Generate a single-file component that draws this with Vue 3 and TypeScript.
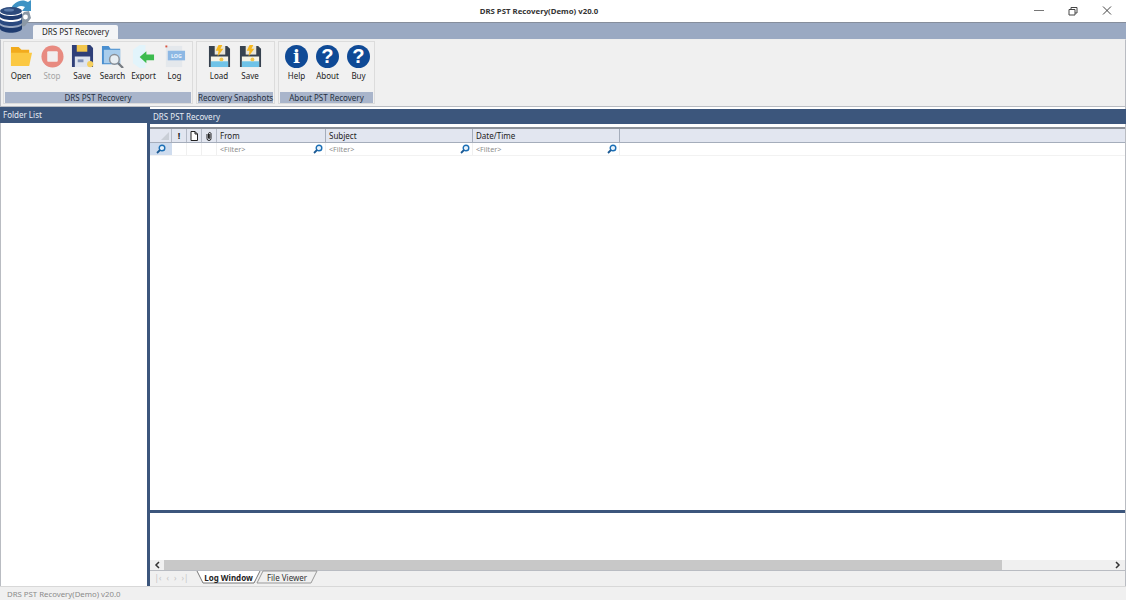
<script setup lang="ts">
const columns = [
  { name: 'From', width: 109 },
  { name: 'Subject', width: 147 },
  { name: 'Date/Time', width: 147 },
]
</script>

<template>
  <div class="app">
    <svg class="logo" viewBox="0 0 32 36" width="32" height="36">
      <path d="M11 9 C13 2 22 -2 28 2 L31 0 L31 11 L22 11 L25 7 C21 5 17 6 15 10Z" fill="#3f93c4" />
      <path d="M24 12 L29 11 L31 18 L28 22 L25 26 L21 27 L21 16Z" fill="#8b98a6" />
      <circle cx="25.500" cy="17" r="2.400" fill="#fff" />
      <ellipse cx="11" cy="11" rx="11" ry="4" fill="#2c4a7c" />
      <ellipse cx="9" cy="10" rx="5" ry="1.500" fill="#5c7cab" />
      <path d="M0 13 C3 17 19 17 22 13 V17 C19 21 3 21 0 17Z" fill="#1f3c70" />
      <path d="M0 19 C3 23 19 23 22 19 V23 C19 27 3 27 0 23Z" fill="#2b4a80" />
      <path d="M0 25 C3 29 19 29 22 25 V29 C19 34 3 34 0 29Z" fill="#1f3c70" />
    </svg>

    <header class="titlebar">
      <span class="title">DRS PST Recovery(Demo) v20.0</span>
      <div class="winbtns">
        <svg width="12" height="12" viewBox="0 0 12 12"><path d="M1 5.500H11" stroke="#777" fill="none" /></svg>
        <svg width="12" height="12" viewBox="0 0 12 12"><path d="M2 4.500H8V10H2ZM4 4.500V2.500H10V8H8" stroke="#444" fill="none" /></svg>
        <svg width="12" height="12" viewBox="0 0 12 12"><path d="M2 1.500L10 9.500M10 1.500L2 9.500" stroke="#444" fill="none" /></svg>
      </div>
    </header>

    <div class="tabstrip">
      <div class="ribbon-tab">DRS PST Recovery</div>
    </div>

    <div class="ribbon">
      <section class="group group-a">
        <div class="tools">
          <div class="tool w-open">
            <svg class="ico" viewBox="0 0 24 24">
              <path d="M1 2H9L12 5H20V9H1Z" fill="#f2ab1d" />
              <path d="M1 8H23L20 22H1Z" fill="#fbc843" />
            </svg>
            <span>Open</span>
          </div>
          <div class="tool w-stop disabled">
            <svg class="ico" viewBox="0 0 24 24">
              <circle cx="12" cy="12" r="11.500" fill="#e88a80" />
              <rect x="6.500" y="6.500" width="11" height="11" rx="1" fill="#f1eeee" />
            </svg>
            <span>Stop</span>
          </div>
          <div class="tool w-save">
            <svg class="ico" viewBox="0 0 24 24">
              <path d="M1 0H20L23 3V23H1Z" fill="#2f3f78" />
              <rect x="6" y="0" width="11" height="7" fill="#f3c64b" />
              <rect x="4" y="12" width="16" height="11" fill="#dfe4ee" />
              <rect x="7" y="15" width="6" height="3" fill="#7e8fb5" />
              <circle cx="20" cy="20" r="3.200" fill="#f5cf5e" />
            </svg>
            <span>Save</span>
          </div>
          <div class="tool w-search">
            <svg class="ico" viewBox="0 0 24 24">
              <path d="M1 1H8L10 4H20V20H1Z" fill="#4a8fd0" />
              <path d="M3 5H20V19H3Z" fill="#a9cdec" />
              <circle cx="14" cy="15" r="5" fill="#e8eef3" stroke="#8a8f96" stroke-width="1.500" />
              <path d="M18 19L23 24" stroke="#777c82" stroke-width="2.400" />
            </svg>
            <span>Search</span>
          </div>
          <div class="tool w-export">
            <svg class="ico" viewBox="0 0 24 24">
              <path d="M1 5L8 0H14V24H8L1 19Z" fill="#e2f4fb" />
              <path d="M8 12.500L15 6.500V10H23V16H15V19Z" fill="#3cbb4e" />
            </svg>
            <span>Export</span>
          </div>
          <div class="tool w-log">
            <svg class="ico" viewBox="0 0 24 24">
              <path d="M3 1H20V23H3Z" fill="#e4e8ec" />
              <rect x="2.500" y="0.500" width="2" height="2" fill="#d9533f" />
              <rect x="5" y="6" width="18" height="10" fill="#8db8e4" />
              <text x="14" y="14" class="logtxt" text-anchor="middle">LOG</text>
            </svg>
            <span>Log</span>
          </div>
        </div>
        <footer class="group-foot">DRS PST Recovery</footer>
      </section>

      <section class="group group-b">
        <div class="tools tools-b">
          <div v-for="n in ['Load', 'Save']" :key="n" class="tool w-snap">
            <svg class="ico" viewBox="0 0 24 24">
              <path d="M1 1H20L23 4V23H1Z" fill="#37424f" />
              <rect x="7" y="1" width="11" height="9" fill="#e9e6da" />
              <path d="M11 0H15L13 4H16L10 12L11 6H8Z" fill="#f7b81f" />
              <rect x="3" y="12" width="18" height="11" fill="#f5f3e6" />
              <rect x="3" y="17" width="18" height="6" fill="#6fc3e8" />
              <circle cx="14" cy="15" r="2" fill="#f3c64b" />
            </svg>
            <span>{{ n }}</span>
          </div>
        </div>
        <footer class="group-foot">Recovery Snapshots</footer>
      </section>

      <section class="group group-c">
        <div class="tools tools-c">
          <div class="tool w-help">
            <svg class="ico" viewBox="0 0 24 24">
              <circle cx="12" cy="12" r="12" fill="#0f4a96" />
              <text x="12" y="18.500" class="glyph" text-anchor="middle">i</text>
            </svg>
            <span>Help</span>
          </div>
          <div v-for="n in ['About', 'Buy']" :key="n" class="tool w-help">
            <svg class="ico" viewBox="0 0 24 24">
              <circle cx="12" cy="12" r="12" fill="#0f4a96" />
              <text x="12" y="19" class="glyph qmark" text-anchor="middle">?</text>
            </svg>
            <span>{{ n }}</span>
          </div>
        </div>
        <footer class="group-foot">About PST Recovery</footer>
      </section>
    </div>

    <main class="main">
      <aside class="left">
        <div class="pane-head left-head">Folder List</div>
        <div class="left-body"></div>
      </aside>

      <div class="right">
        <div class="pane-head right-head">DRS PST Recovery</div>
        <div class="grid-wrap">
          <div class="grid-row head-row">
            <div class="corner">
              <svg width="10" height="10" viewBox="0 0 10 10"><path d="M9 1V9H1Z" fill="#c9ced6" /></svg>
            </div>
            <div class="icol">!</div>
            <div class="icol">
              <svg width="8" height="10" viewBox="0 0 8 10"><path d="M1 .5H5L7.500 3V9.500H1ZM5 .5V3H7.500" fill="#fff" stroke="#222" /></svg>
            </div>
            <div class="icol">
              <svg width="8" height="10" viewBox="0 0 8 10"><path d="M2 3V7.500A2 2 0 0 0 6 7.500V2.500A1.300 1.300 0 0 0 3.500 2.500V7A.6.6 0 0 0 4.700 7V3" fill="none" stroke="#222" /></svg>
            </div>
            <div v-for="c in columns" :key="c.name" class="hcol" :style="{ width: c.width + 'px' }">{{ c.name }}</div>
            <div class="hrest"></div>
          </div>
          <div class="grid-row filter-row">
            <div class="fcorner">
              <svg class="lens" viewBox="0 0 10 10"><circle cx="6" cy="4" r="2.800" fill="#e8f2fb" stroke="#1c6fb5" stroke-width="1.400" /><path d="M4 6L1 9" stroke="#1c5a94" stroke-width="1.800" /></svg>
            </div>
            <div class="ficol"></div>
            <div class="ficol"></div>
            <div class="ficol"></div>
            <div v-for="c in columns" :key="c.name" class="fcol" :style="{ width: c.width + 'px' }">
              <span>&lt;Filter&gt;</span>
              <svg class="lens" viewBox="0 0 10 10"><circle cx="6" cy="4" r="2.800" fill="#e8f2fb" stroke="#1c6fb5" stroke-width="1.400" /><path d="M4 6L1 9" stroke="#1c5a94" stroke-width="1.800" /></svg>
            </div>
          </div>
        </div>
        <div class="hsplit"></div>
        <div class="log"></div>
        <div class="scrollbar">
          <div class="arrow">
            <svg width="6" height="8" viewBox="0 0 6 8"><path d="M5 1L2 4L5 7" fill="none" stroke="#333" stroke-width="1.500" /></svg>
          </div>
          <div class="track"><div class="thumb"></div></div>
          <div class="arrow">
            <svg width="6" height="8" viewBox="0 0 6 8"><path d="M1 1L4 4L1 7" fill="none" stroke="#333" stroke-width="1.500" /></svg>
          </div>
        </div>
        <div class="sheet-bar">
          <div class="nav"><i>|‹</i><i>‹</i><i>›</i><i>›|</i></div>
          <div class="sheet active">
            <svg class="sheet-shape" viewBox="0 0 63 13" preserveAspectRatio="none"><path d="M0 0L6 12H57L63 0" fill="#fff" stroke="#777" /></svg>
            <span>Log Window</span>
          </div>
          <div class="sheet inactive">
            <svg class="sheet-shape" viewBox="0 0 60 13" preserveAspectRatio="none"><path d="M6 0H60L54 12H0Z" fill="#f0f0f0" stroke="#999" /></svg>
            <span>File Viewer</span>
          </div>
        </div>
      </div>
    </main>

    <footer class="status">DRS PST Recovery(Demo) v20.0</footer>
  </div>
</template>

<style>
html, body { margin: 0; padding: 0; background: #fff; }
</style>

<style scoped>
.app {
  width: 1126px;
  height: 600px;
  display: flex;
  flex-direction: column;
  position: relative;
  overflow: hidden;
  font-family: "Noto Sans", "Liberation Sans", sans-serif;
  font-size: 8px;
  color: #222;
  background: #f0f0f0;
}
.logo { position: absolute; left: 0; top: 0; z-index: 3; }
.titlebar {
  height: 22px;
  background: #fff;
  flex: none;
  position: relative;
  display: flex;
  align-items: center;
  justify-content: center;
  padding-right: 48px;
  box-sizing: border-box;
}
.title { font-weight: 700; font-size: 7.800px; color: #333; }
.winbtns {
  position: absolute;
  right: 13px;
  top: 5px;
  display: flex;
  gap: 22px;
}
.tabstrip {
  height: 17px;
  flex: none;
  background: #9aa9c2;
  border-top: 1px solid #868e9c;
  box-sizing: border-box;
  padding: 2px 0 0 33px;
}
.ribbon-tab {
  width: 85px;
  height: 14px;
  background: #f4f5f7;
  border-radius: 2px 2px 0 0;
  text-align: center;
  line-height: 14px;
  color: #222;
}
.ribbon {
  height: 68px;
  flex: none;
  box-sizing: border-box;
  background: #f0f0f0;
  border: 1px solid #b9bcc2;
  border-top-color: #eee;
  padding: 1px 2px 2px 2px;
  display: flex;
  gap: 3px;
}
.group {
  display: flex;
  flex-direction: column;
  background: #f1f1f1;
  border: 1px solid #dcdcdc;
  box-sizing: border-box;
}
.group-a { width: 190px; }
.group-b { width: 79px; }
.group-c { width: 97px; }
.tools { flex: 1; display: flex; padding: 3px 0 0 1px; }
.tools-b { padding-left: 10px; gap: 7px; }
.tools-c { padding-left: 2px; gap: 0; }
.tool { display: flex; flex-direction: column; align-items: center; gap: 2px; line-height: 12px; white-space: nowrap; }
.tool.disabled span { color: #a4a4a4; }
.ico { width: 23px; height: 23px; display: block; }
.w-open { width: 32px; }
.w-stop { width: 30px; }
.w-save { width: 30px; }
.w-search { width: 31px; }
.w-export { width: 31px; }
.w-log { width: 31px; }
.w-snap { width: 24px; }
.w-help { width: 31px; }
.logtxt { font-size: 5.500px; font-weight: 700; fill: #eef5fc; }
.glyph { font-family: "DejaVu Serif", "Liberation Serif", serif; font-size: 19px; font-weight: 700; fill: #fff; }
.qmark { font-family: "Liberation Sans", sans-serif; font-size: 21px; }
.group-foot {
  height: 11px;
  flex: none;
  background: #a9b5cb;
  text-align: center;
  line-height: 11px;
  color: #26303f;
  margin: 0 1px;
  white-space: nowrap;
}
.main { flex: 1; min-height: 0; display: flex; background: #fff; }
.left {
  width: 147px;
  flex: none;
  display: flex;
  flex-direction: column;
  border-left: 1px solid #b9bcc2;
  box-sizing: border-box;
}
.pane-head {
  height: 15px;
  flex: none;
  background: #3c567c;
  color: #e6ebf3;
  line-height: 15px;
  padding-left: 3px;
}
.left-head { height: 16px; margin-left: -1px; line-height: 16px; }
.left-body { flex: 1; background: #fff; }
.right {
  flex: 1;
  min-width: 0;
  display: flex;
  flex-direction: column;
  padding-top: 2px;
  border-left: 3px solid #3c567c;
  border-right: 1px solid #b9bcc2;
  box-sizing: border-box;
}
.right-head { padding-left: 3px; margin-right: -1px; }
.grid-wrap {
  flex: 1;
  min-height: 0;
  background: #fff;
  padding-top: 3px;
}
.grid-row { display: flex; }
.head-row {
  height: 16px;
  border-top: 2px solid #8d929a;
  border-bottom: 1px solid #a5adbb;
  background: #e2e6f0;
  box-sizing: border-box;
}
.corner, .fcorner {
  width: 22px;
  flex: none;
  display: flex;
  align-items: center;
  justify-content: flex-end;
  padding-right: 1px;
  box-sizing: border-box;
}
.corner { border-right: 1px solid #b4bac6; }
.fcorner { background: #cfdcee; justify-content: center; }
.icol {
  width: 15px;
  flex: none;
  box-sizing: border-box;
  border-right: 1px solid #b4bac6;
  display: flex;
  align-items: center;
  justify-content: center;
  font-weight: 700;
  font-size: 9px;
}
.hcol {
  flex: none;
  box-sizing: border-box;
  border-right: 1px solid #a5adbb;
  padding-left: 3px;
  line-height: 14px;
  color: #222;
}
.hrest { flex: 1; }
.filter-row { height: 13px; color: #8d8d8d; box-sizing: border-box; border-bottom: 1px solid #f2f2f2; }
.ficol { width: 15px; flex: none; box-sizing: border-box; border-right: 1px solid #f0f0f0; }
.fcol {
  flex: none;
  box-sizing: border-box;
  border-right: 1px solid #f0f0f0;
  padding: 0 2px 0 3px;
  display: flex;
  align-items: center;
  justify-content: space-between;
  font-size: 7.200px;
}
.lens { width: 10px; height: 10px; display: block; }
.hsplit { height: 3px; flex: none; background: #3c567c; }
.log { height: 47px; flex: none; background: #fff; }
.scrollbar {
  height: 11px;
  flex: none;
  display: flex;
  background: #f0f0f0;
  border-bottom: 1px solid #b9bcc2;
  box-sizing: border-box;
}
.arrow { width: 14px; flex: none; display: flex; align-items: center; justify-content: center; }
.track { flex: 1; }
.thumb { width: 838px; height: 100%; background: #c8c8c8; }
.sheet-bar {
  height: 15px;
  flex: none;
  display: flex;
  align-items: flex-start;
  background: #f0f0f0;
  padding-left: 2px;
}
.nav { width: 45px; display: flex; justify-content: space-around; color: #c4c4c4; font-size: 8px; line-height: 13px; padding-right: 6px; box-sizing: border-box; }
.nav i { font-style: normal; }
.sheet {
  position: relative;
  height: 13px;
  line-height: 13px;
  text-align: center;
  color: #333;
}
.sheet span { position: relative; }
.sheet-shape { position: absolute; inset: 0; width: 100%; height: 100%; overflow: visible; }
.sheet.active { width: 63px; font-weight: 700; color: #222; z-index: 1; }
.sheet.inactive { width: 60px; margin-left: -3px; }
.status {
  height: 14px;
  flex: none;
  box-sizing: border-box;
  background: #f0f0f0;
  color: #8b8b8b;
  font-size: 7.800px;
  line-height: 15px;
  padding-left: 7px;
  border-top: 1px solid #d8d8d8;
}
</style>
